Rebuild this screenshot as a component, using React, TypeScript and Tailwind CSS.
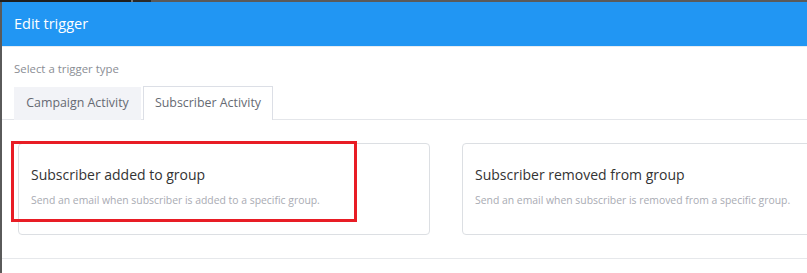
import React from 'react'

const font = { fontFamily: '"Open Sans", Lato, sans-serif' }

function TriggerCard({ title, text }: { title: string; text: string }) {
  return (
    <div className="h-[92px] border border-[#dcdfe3] rounded-[4px] pl-[12px] pt-[21px] bg-white">
      <div className="text-[14px] leading-[20px] text-[#333]">{title}</div>
      <div className="text-[10.4px] leading-[16px] text-[#a9abb3] mt-[7px]">{text}</div>
    </div>
  )
}

export default function App() {
  return (
    <div className="w-[807px] h-[273px] overflow-hidden bg-[#5a5a5a] relative" style={font}>
      <div className="flex h-[2px]">
        <div className="w-[131px] shrink-0 bg-[#1e1e1e]" />
        <div className="w-[2px] shrink-0 bg-[#777]" />
        <div className="w-[18px] shrink-0 bg-[#2a2a2a]" />
        <div className="flex-1 bg-[#5a5a5a]" />
      </div>
      <div className="flex h-[271px]">
        <div className="w-[2px] shrink-0 bg-[#5a5a5a]" />
        <div className="flex-1 min-w-0 bg-white flex flex-col">
          <div className="h-[44px] bg-[#2196f3] px-[12px] flex items-center text-white text-[14.5px]">
            Edit trigger
          </div>
          <div className="h-[1px] bg-[#e6ecf2]" />
          <div className="px-[12px] pt-[14px] text-[11.4px] leading-[16px] text-[#8a8d94]">
            Select a trigger type
          </div>
          <div className="flex items-end mt-[9px] pl-[12px] border-b border-[#e4e6ea] h-[34px]">
            <div className="h-[33px] w-[127px] shrink-0 bg-[#f2f3f7] flex items-center justify-center text-[12.4px] text-[#666a73] mb-[-1px]">
              Campaign Activity
            </div>
            <div className="h-[34px] w-[130px] shrink-0 ml-[2px] bg-white border border-b-0 border-[#dcdfe6] flex items-center justify-center text-[12.4px] text-[#666a73] mb-[-1px]">
              Subscriber Activity
            </div>
          </div>
          <div className="flex gap-[32px] pl-[16px] pt-[23px]">
            <div className="w-[412px] shrink-0">
              <TriggerCard
                title="Subscriber added to group"
                text="Send an email when subscriber is added to a specific group."
              />
            </div>
            <div className="w-[412px] shrink-0">
              <TriggerCard
                title="Subscriber removed from group"
                text="Send an email when subscriber is removed from a specific group."
              />
            </div>
          </div>
          <div className="mt-[23px] h-[1px] bg-[#e6e8eb]" />
        </div>
      </div>
      <div className="absolute left-[11px] top-[141px] w-[346px] h-[81px] border-[3px] border-[#e81d25]" />
    </div>
  )
}
